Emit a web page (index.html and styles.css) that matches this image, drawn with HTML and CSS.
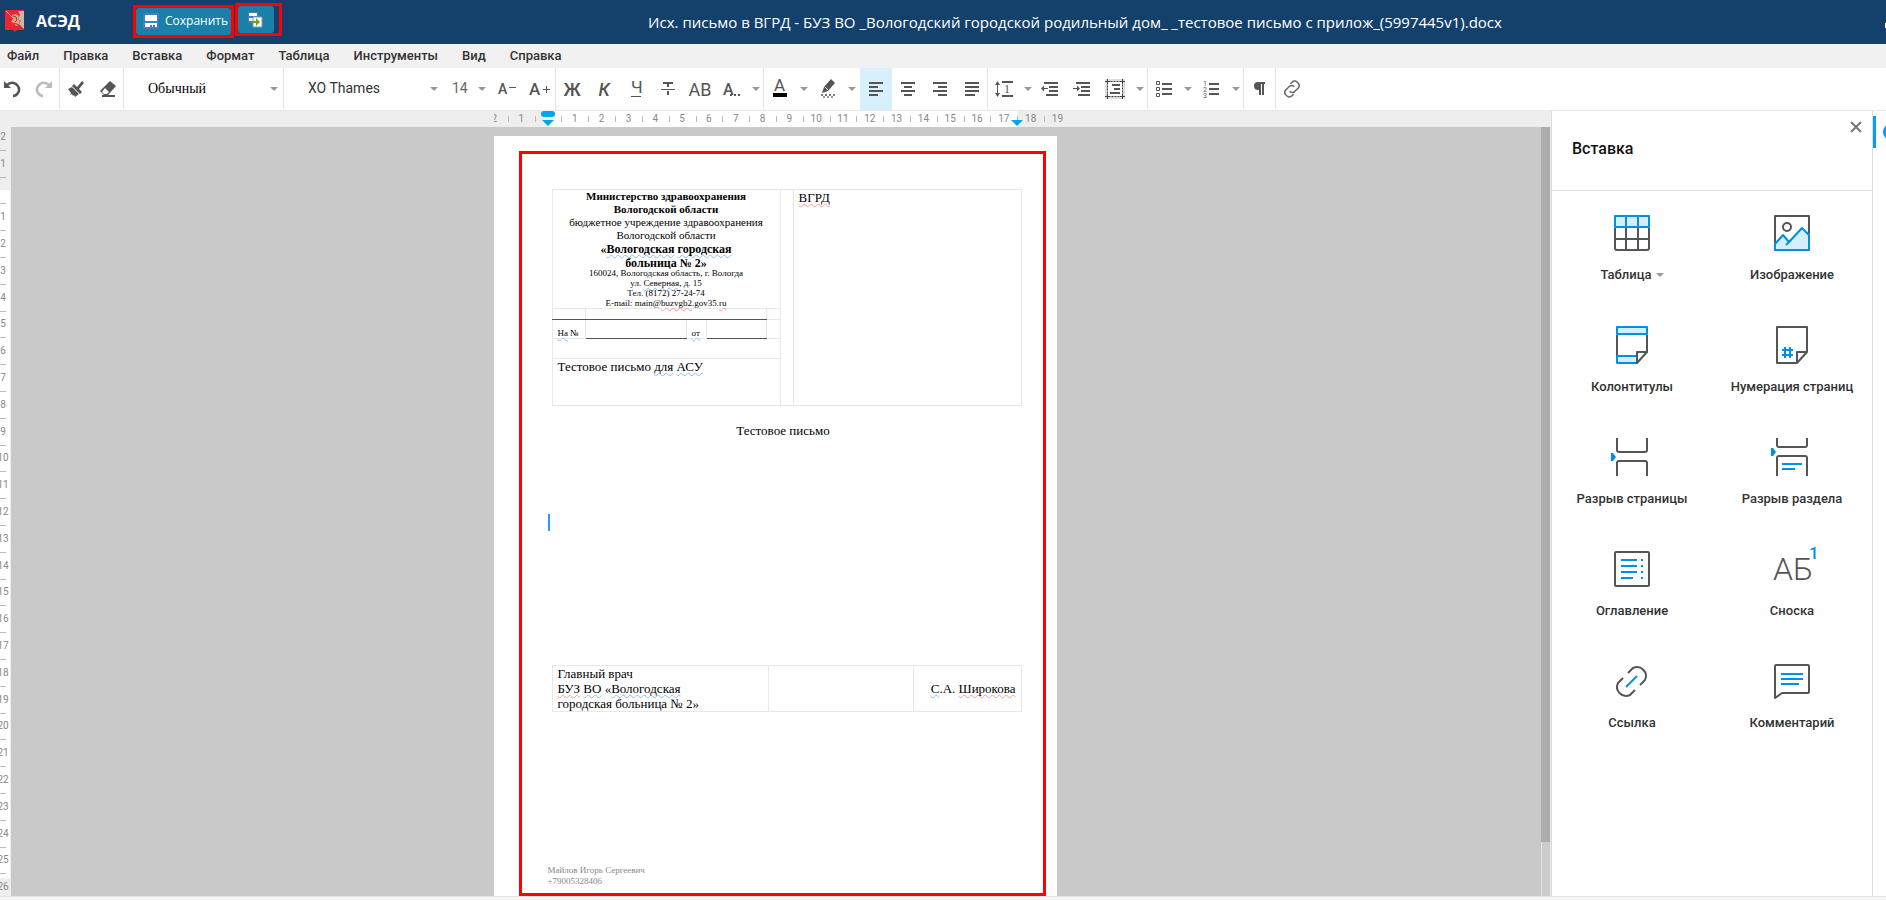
FILE: index.html
```html
<!DOCTYPE html>
<html lang="ru">
<head>
    <meta charset="UTF-8">
    <meta name="viewport" content="width=device-width, initial-scale=1.0">
    <title>АСЭД</title>
    <link rel="stylesheet" href="styles.css">
</head>
<body>
    <header class="topbar">
        <svg class="logo" width="20" height="24" viewBox="0 0 20 24">
            <path d="M0 1h19v19q0 1-1 1h-6l-2 2-2-2H1q-1 0-1-1z" fill="#ee2530"/>
            <path d="M13 2h6v18l-5-5 2-3-3-2 2-4z" fill="#c9b9a4"/>
            <path d="M1 2l8 8" stroke="#d9c8cf" stroke-width="1"/>
            <path d="M7 6l4-1 3 2-1 3 2 2-1 4-3 1-2-3-3-1 2-3z" fill="#e0a080"/>
            <path d="M8 7l3 1 1 3-2 2M9 14l5 2-2 3" stroke="#8c4a42" fill="none"/>
        </svg>
        <span class="brand">АСЭД</span>
        <div class="mark mark-save">
            <button class="top-button save-button">
                <svg width="16" height="16" viewBox="0 0 16 16">
                    <path d="M0 0h16v16H0z" fill="#3d7fc1"/>
                    <path d="M2 2h12v6H2zM2 10h12v4h-2v-2h-2v2H9v-2H7v2H2z" fill="#fff"/>
                </svg>
                Сохранить
            </button>
        </div>
        <div class="mark mark-export">
            <button class="top-button export-button" aria-label="Сохранить и закрыть">
                <svg width="16" height="16" viewBox="0 0 16 16">
                    <path d="M0 0h10v11H0z" fill="#3d7fc1"/>
                    <path d="M1 1h8v3H1zM1 6h5v3H1z" fill="#fff"/>
                    <path d="M5 5h9v10H5z" fill="#fff" stroke="#8b98a5"/>
                    <path d="M4 9h4V6l4 4-4 4v-3H4z" fill="#6aa51d"/>
                </svg>
            </button>
        </div>
        <h1 class="doc-title">Исх. письмо в ВГРД - БУЗ ВО _Вологодский городской родильный дом_ _тестовое письмо с прилож_(5997445v1).docx</h1>
        <button class="minimize" aria-label="Свернуть"></button>
    </header>

    <nav class="menu">
        <a href="#">Файл</a>
        <a href="#">Правка</a>
        <a href="#">Вставка</a>
        <a href="#">Формат</a>
        <a href="#">Таблица</a>
        <a href="#">Инструменты</a>
        <a href="#">Вид</a>
        <a href="#">Справка</a>
    </nav>

    <!-- Панель инструментов -->
    <div class="toolbar">
        <div class="group">
            <button class="tool" aria-label="Отменить">
                <svg width="18" height="18" viewBox="0 0 18 18"><path d="M1 1v7h7z" fill="#555"/><path d="M4 5q4-4 9-1 5 4 2 9-2 3-5 3" fill="none" stroke="#555" stroke-width="2.500"/></svg>
            </button>
            <button class="tool" aria-label="Повторить">
                <svg width="18" height="18" viewBox="0 0 18 18"><path d="M17 1v7h-7z" fill="#bbb"/><path d="M14 5q-4-4-9-1-5 4-2 9 2 3 5 3" fill="none" stroke="#bbb" stroke-width="2.500"/></svg>
            </button>
        </div>
        <div class="group">
            <button class="tool" aria-label="Копировать формат">
                <svg width="18" height="18" viewBox="0 0 18 18" fill="#555"><path d="M15 1l2 2-5 6-2-2zM7 4l8 8-2 2-8-8zM1 9l4-2 7 7-4 3-1-2-1 1-1-2-2 1 1-2z"/></svg>
            </button>
            <button class="tool" aria-label="Очистить формат">
                <svg width="18" height="18" viewBox="0 0 18 18"><path d="M11 1l6 5-8 9H5l-4-4z" fill="#555"/><path d="M6 8l4 4-2 2H5l-2-2z" fill="#fff"/><path d="M3 16h13" stroke="#555" stroke-width="2"/></svg>
            </button>
        </div>
        <div class="group">
            <label class="drop drop-style"><select aria-label="Стиль"><option>Обычный</option></select></label>
        </div>
        <div class="group">
            <label class="drop drop-font"><select aria-label="Шрифт"><option>XO Thames</option></select></label>
            <label class="drop drop-size"><select aria-label="Размер"><option>14</option></select></label>
            <button class="tool" aria-label="Уменьшить шрифт">
                <svg width="22" height="20" viewBox="0 0 22 20"><text x="1" y="15" font-size="14" font-weight="500">A</text><path d="M12 8.500h7" stroke="#555"/></svg>
            </button>
            <button class="tool" aria-label="Увеличить шрифт">
                <svg width="22" height="20" viewBox="0 0 22 20"><text x="0" y="16" font-size="17" font-weight="500">A</text><path d="M14 10.500h7M17.500 7v7" stroke="#555"/></svg>
            </button>
        </div>
        <div class="group">
            <button class="tool letter medium" aria-label="Жирный">Ж</button>
            <button class="tool letter medium italic" aria-label="Курсив">К</button>
            <button class="tool letter" aria-label="Подчёркнутый">
                <svg width="18" height="20" viewBox="0 0 18 20"><text x="4" y="14" font-size="17">Ч</text><path d="M4 17.500h10" stroke="#555"/></svg>
            </button>
            <button class="tool" aria-label="Зачёркнутый">
                <svg width="18" height="18" viewBox="0 0 18 18"><path d="M4 3h10M9 3v4M9 11v4" stroke="#555" stroke-width="2"/><path d="M2 9.500h14" stroke="#555"/></svg>
            </button>
            <button class="tool letter" aria-label="Прописные">АВ</button>
            <button class="tool" aria-label="Другие">
                <svg width="20" height="20" viewBox="0 0 20 20"><text x="1" y="16" font-size="16" font-weight="500">A</text><path d="M8 16h2M12 16h2M16 16h2" stroke="#555" stroke-width="2"/></svg>
            </button>
            <button class="arrow" aria-label="Ещё"></button>
        </div>
        <div class="group">
            <button class="tool" aria-label="Цвет текста">
                <svg width="18" height="20" viewBox="0 0 18 20"><text x="3" y="12" font-size="17">A</text><path d="M2 14h14v4H2z" fill="#000"/></svg>
            </button>
            <button class="arrow" aria-label="Выбрать цвет"></button>
            <button class="tool" aria-label="Выделение цветом">
                <svg width="16" height="20" viewBox="0 0 16 20"><path d="M11 0l4 4-7 8-6 2 2-6z" fill="#555"/><path d="M5 8l3 3" stroke="#fff"/><path d="M1 16h14" stroke="#777" stroke-width="2" stroke-dasharray="2 2"/><path d="M3 18h12" stroke="#999" stroke-width="2" stroke-dasharray="2 2"/></svg>
            </button>
            <button class="arrow" aria-label="Выбрать выделение"></button>
            <button class="tool active" aria-label="По левому краю">
                <svg width="14" height="14" viewBox="0 0 14 14"><path d="M0 1h14M0 5h9M0 9h14M0 13h9" stroke="#555" stroke-width="2"/></svg>
            </button>
            <button class="tool" aria-label="По центру">
                <svg width="14" height="14" viewBox="0 0 14 14"><path d="M0 1h14M3 5h8M0 9h14M3 13h8" stroke="#555" stroke-width="2"/></svg>
            </button>
            <button class="tool" aria-label="По правому краю">
                <svg width="14" height="14" viewBox="0 0 14 14"><path d="M0 1h14M5 5h9M0 9h14M5 13h9" stroke="#555" stroke-width="2"/></svg>
            </button>
            <button class="tool" aria-label="По ширине">
                <svg width="14" height="14" viewBox="0 0 14 14"><path d="M0 1h14M0 5h14M0 9h14M0 13h10" stroke="#555" stroke-width="2"/></svg>
            </button>
        </div>
        <div class="group">
            <button class="tool" aria-label="Интервал">
                <svg width="18" height="18" viewBox="0 0 18 18"><path d="M7 2h11M7 16h11" stroke="#555" stroke-width="2"/><path d="M2.500 3v12" stroke="#555"/><path d="M0 5l2.500-4L5 5zM0 13l2.500 4L5 13z" fill="#555"/><text x="9" y="13" font-size="12" class="serif">1</text></svg>
            </button>
            <button class="arrow" aria-label="Выбрать интервал"></button>
            <button class="tool" aria-label="Уменьшить отступ">
                <svg width="20" height="14" viewBox="0 0 20 14"><path d="M2 1h14M7 5h9M7 9h9M4 13h12" stroke="#555" stroke-width="2"/><path d="M1 6.500h5" stroke="#555"/><path d="M-1 6.500l3-3v6z" fill="#555"/></svg>
            </button>
            <button class="tool" aria-label="Увеличить отступ">
                <svg width="20" height="14" viewBox="0 0 20 14"><path d="M2 1h14M7 5h9M7 9h9M4 13h12" stroke="#555" stroke-width="2"/><path d="M-1 6.500h5" stroke="#555"/><path d="M6 6.500l-3-3v6z" fill="#555"/></svg>
            </button>
            <button class="tool" aria-label="Границы">
                <svg width="22" height="20" viewBox="0 0 22 20"><path d="M0 0h20v20H0z" fill="#ddd"/><path d="M3 3h14v14H3z" fill="#fff"/><path d="M2.500 2.500h15v15h-15z" fill="none" stroke="#444" stroke-dasharray="2 1"/><path d="M2.500 0v5M0 2.500h5M17.500 0v5M15 2.500h5M2.500 15v5M0 17.500h5M17.500 15v5M15 17.500h5" stroke="#444"/><path d="M7 6h8M9 10h6M5 14h10" stroke="#555" stroke-width="2"/></svg>
            </button>
            <button class="arrow" aria-label="Выбрать границы"></button>
        </div>
        <div class="group">
            <button class="tool" aria-label="Маркированный список">
                <svg width="16" height="16" viewBox="0 0 16 16"><path d="M.5.5h3v3h-3zM.5 6.500h3v3h-3zM.5 12.500h3v3h-3z" fill="none" stroke="#555"/><path d="M6 3h10M6 8h10M6 13h10" stroke="#555" stroke-width="2"/></svg>
            </button>
            <button class="arrow" aria-label="Выбрать маркер"></button>
            <button class="tool" aria-label="Нумерованный список">
                <svg width="18" height="20" viewBox="0 0 18 20"><text x="0" y="7" font-size="7">1</text><text x="0" y="13" font-size="7">2</text><text x="0" y="19" font-size="7">3</text><path d="M6 5h10M6 10h10M6 15h10" stroke="#555" stroke-width="2"/></svg>
            </button>
            <button class="arrow" aria-label="Выбрать нумерацию"></button>
        </div>
        <div class="group">
            <button class="tool" aria-label="Непечатаемые знаки">
                <svg width="12" height="14" viewBox="0 0 12 14"><path d="M4 1h7M6 1v12M9 1v12" stroke="#555" stroke-width="2"/><path d="M6 0H4a4 4 0 0 0 0 8h2z" fill="#555"/></svg>
            </button>
        </div>
        <div class="group">
            <button class="tool" aria-label="Ссылка">
                <svg width="18" height="18" viewBox="0 0 24 24" fill="none" stroke="#666" stroke-width="2"><path d="M10 5l2-2a5 5 0 0 1 8 1 5 5 0 0 1 1 6l-6 6a5 5 0 0 1-6-1"/><path d="M14 19l-2 2a5 5 0 0 1-8-1 5 5 0 0 1-1-6l6-6a5 5 0 0 1 6 1"/></svg>
            </button>
        </div>
    </div>

    <div class="workspace">
        <main class="editor">
            <!-- Горизонтальная линейка -->
            <div class="ruler-top">
                <div class="ruler-track">
                    <div class="ruler-cells">
                        <span>2</span><span>1</span><span></span><span>1</span><span>2</span><span>3</span><span>4</span><span>5</span><span>6</span><span>7</span><span>8</span><span>9</span><span>10</span><span>11</span><span>12</span><span>13</span><span>14</span><span>15</span><span>16</span><span>17</span><span>18</span><span>19</span>
                    </div>
                    <i class="indent-first"></i>
                    <i class="indent indent-left"></i>
                    <i class="indent indent-right"></i>
                </div>
            </div>
            <div class="editor-body">
                <!-- Вертикальная линейка -->
                <div class="ruler-side">
                    <div class="side-cells">
                        <span>2</span><span>1</span><span></span><span>1</span><span>2</span><span>3</span><span>4</span><span>5</span><span>6</span><span>7</span><span>8</span><span>9</span><span>10</span><span>11</span><span>12</span><span>13</span><span>14</span><span>15</span><span>16</span><span>17</span><span>18</span><span>19</span><span>20</span><span>21</span><span>22</span><span>23</span><span>24</span><span>25</span><span>26</span>
                    </div>
                </div>
                <div class="canvas">
                    <article class="sheet">
                        <div class="frame">
                            <table class="letterhead">
                                <colgroup><col class="c1"><col class="c2"><col class="c3"><col class="c4"><col class="c5"><col class="c6"><col></colgroup>
                                <tr class="row-org">
                                    <td colspan="5" class="org">
                                        <p class="org-main"><b>Министерство здравоохранения</b><br><b>Вологодской области</b><br>бюджетное учреждение здравоохранения<br>Вологодской области</p>
                                        <p class="org-name">«<u class="gr">Вологодская</u> <u class="gr">городская</u><br>больница № 2»</p>
                                        <p class="org-address">160024, Вологодская область, г. Вологда<br>ул. <u class="gr">Северная</u>, д. 15<br>Тел. (8172) 27-24-74<br>E-mail: main@<u class="sp">buzvgb2</u>.gov35.<u class="sp">ru</u></p>
                                    </td>
                                    <td rowspan="5"></td>
                                    <td rowspan="5" class="addressee"><u class="sp">ВГРД</u></td>
                                </tr>
                                <tr class="row-number"><td class="line"></td><td class="line" colspan="3"></td><td></td></tr>
                                <tr class="row-reply"><td class="tiny"><u class="gr">На</u> №</td><td class="line"></td><td class="tiny"><u class="gr">от</u></td><td class="line"></td><td></td></tr>
                                <tr class="row-gap"><td colspan="5"></td></tr>
                                <tr class="row-subject"><td colspan="5">Тестовое письмо <u class="gr">для</u> <u class="gr">АСУ</u></td></tr>
                            </table>
                            <p class="heading">Тестовое письмо</p>
                            <div class="typing"><i class="caret"></i></div>
                            <table class="signature">
                                <colgroup><col class="s1"><col class="s2"><col></colgroup>
                                <tr>
                                    <td>Главный врач<br><u class="sp">БУЗ</u> <u class="gr">ВО</u> «<u class="gr">Вологодская</u><br>городская больница № 2»</td>
                                    <td></td>
                                    <td class="signer"><u class="gr">С</u>.А. <u class="sp">Широкова</u></td>
                                </tr>
                            </table>
                            <p class="author">Майлов Игорь Сергеевич<br>+79005328406</p>
                        </div>
                    </article>
                </div>
                <div class="scrollbar"><div class="thumb"></div></div>
            </div>
        </main>

        <!-- Боковая панель вставки -->
        <aside class="panel">
            <div class="panel-head">
                <h2>Вставка</h2>
                <button class="close" aria-label="Закрыть"><svg width="12" height="12" viewBox="0 0 12 12"><path d="M1 1l10 10M11 1L1 11" stroke="#777" stroke-width="2"/></svg></button>
            </div>
            <div class="cards">
                <button class="card">
                    <svg viewBox="0 0 40 40"><path d="M3 15v20q0 2 2 2h30q2 0 2-2V15M3 26h34M14 15v22M26 15v22"/><path class="blue fill" d="M3 3h34v11H3z"/><path class="blue" d="M14 3v11M26 3v11"/></svg>
                    <span>Таблица <i class="caret-down"></i></span>
                </button>
                <button class="card">
                    <svg viewBox="0 0 40 40"><path d="M3 30V3h34v18"/><circle cx="15" cy="14" r="4"/><path class="blue fill" d="M3 31l8-9 6 7 13-14 7 7v15H3z"/><path class="blue" d="M14 32l4-4"/></svg>
                    <span>Изображение</span>
                </button>
                <button class="card">
                    <svg viewBox="0 0 40 40"><path d="M5 10v22M35 10v18"/><path class="blue fill" d="M5 2h30v7H5zM25 31H5v7h20z"/><path class="paper" d="M25 38V27h10z"/></svg>
                    <span>Колонтитулы</span>
                </button>
                <button class="card">
                    <svg viewBox="0 0 40 40"><path d="M25 38H5V2h30v25L25 38V27h10"/><path class="blue" d="M13 22v11M18 22v11M10 25h11M10 30h11"/></svg>
                    <span>Нумерация страниц</span>
                </button>
                <button class="card">
                    <svg viewBox="0 0 40 40"><path d="M5 1v12q0 2 2 2h26q2 0 2-2V1M5 39V26q0-2 2-2h26q2 0 2 2v13"/><path d="M-1 16h2l3 4-3 4h-2z" class="solid"/></svg>
                    <span>Разрыв страницы</span>
                </button>
                <button class="card">
                    <svg viewBox="0 0 40 40"><path d="M5 1v7q0 2 2 2h26q2 0 2-2V1M5 39V21q0-2 2-2h26q2 0 2 2v18"/><path class="blue" d="M10 27h20M10 32h13"/><path d="M-1 11h2l3 4-3 4h-2z" class="solid"/></svg>
                    <span>Разрыв раздела</span>
                </button>
                <button class="card">
                    <svg viewBox="0 0 40 40"><rect x="3" y="3" width="34" height="34" rx="1"/><path class="blue" d="M9 11h16M9 17h16M9 23h16M9 29h12"/><path class="blue" d="M29 11h2M29 17h2M29 23h2M29 29h2"/></svg>
                    <span>Оглавление</span>
                </button>
                <button class="card">
                    <svg viewBox="0 0 40 40"><text x="1" y="31" font-size="32" font-weight="300">АБ</text><text x="37" y="10" font-size="17" class="note">1</text></svg>
                    <span>Сноска</span>
                </button>
                <button class="card">
                    <svg viewBox="0 0 40 40"><path d="M16 12l5-5a9 9 0 0 1 12 12l-5 5M11 17l-5 5a9 9 0 0 0 12 12l5-5"/><path class="blue" d="M14 26l11-11"/></svg>
                    <span>Ссылка</span>
                </button>
                <button class="card">
                    <svg viewBox="0 0 40 40"><path d="M3 37V5q0-1 1-1h32q1 0 1 1v26q0 1-1 1H10z"/><path class="blue" d="M9 13h22M9 18h22M9 23h18"/></svg>
                    <span>Комментарий</span>
                </button>
            </div>
        </aside>
        <div class="rail"><button class="rail-button" aria-label="Вставка"></button></div>
    </div>
    <footer class="status"></footer>
</body>
</html>
```
FILE: styles.css
```css
* {
    box-sizing: border-box;
}
body {
    margin: 0;
    height: 100vh;
    display: flex;
    flex-direction: column;
    overflow: hidden;
    font-family: Roboto, sans-serif;
    font-size: 13px;
    color: #333;
    background: #fff;
}
button {
    border: none;
    background: none;
    padding: 0;
    font: inherit;
    color: inherit;
    cursor: pointer;
}
p, h1, h2 {
    margin: 0;
}

/* Шапка */
.topbar {
    display: flex;
    align-items: flex-start;
    height: 44px;
    flex: none;
    background: #14406c;
    color: #fff;
    font-family: "Open Sans", sans-serif;
}
.logo {
    margin: 9px 11px 0 5px;
}
.brand {
    width: 97px;
    line-height: 42px;
    font-size: 16px;
    font-weight: 700;
}
.mark {
    display: flex;
    border: 3px solid #f00;
}
.mark-save {
    width: 101px;
    height: 33px;
    margin-top: 5px;
}
.mark-export {
    width: 47px;
    height: 33px;
    margin: 3px 0 0 1px;
}
.top-button {
    display: flex;
    align-items: center;
    background: #1a7fa9;
    color: #fff;
    border-radius: 3px;
}
.save-button {
    flex: 1;
    gap: 6px;
    padding: 0 0 2px 7px;
    font-size: 12px;
}
.export-button {
    width: 36px;
    justify-content: center;
}
.doc-title {
    flex: 1;
    text-align: center;
    line-height: 44px;
    font-size: 15px;
    font-weight: 400;
    white-space: nowrap;
}
.minimize {
    width: 1px;
    height: 5px;
    margin: 23px 0 0 17px;
    background: #fff;
}

/* Меню */
.menu {
    display: flex;
    gap: 24px;
    flex: none;
    height: 24px;
    padding-left: 7px;
    background: #f1f1f1;
}
.menu a {
    color: #333;
    text-decoration: none;
    font-weight: 500;
    line-height: 23px;
}

/* Панель инструментов */
.toolbar {
    display: flex;
    flex: none;
    height: 43px;
    margin-left: -4px;
    border-bottom: 1px solid #e8e8e8;
}
.group {
    display: flex;
}
.group + .group {
    margin-left: -1px;
    border-left: 1px solid #e4e4e4;
}
.tool {
    display: flex;
    align-items: center;
    justify-content: center;
    width: 32px;
    color: #555;
}
.tool svg {
    overflow: visible;
}
.tool text {
    fill: #555;
}
.tool .serif {
    font-family: "Liberation Serif", serif;
}
.tool.active {
    background: #d8effd;
}
.letter {
    font-size: 18px;
}
.medium {
    font-weight: 500;
}
.italic {
    font-style: italic;
}
.arrow {
    width: 16px;
    display: flex;
    align-items: center;
    justify-content: center;
}
.arrow::after, .drop::after, .caret-down {
    content: "";
    border: 4px solid transparent;
    border-top-color: #999;
    border-bottom: none;
}
.drop {
    position: relative;
    display: flex;
    width: 160px;
}
.drop::after {
    position: absolute;
    right: 6px;
    top: 19px;
    pointer-events: none;
}
.drop select {
    appearance: none;
    width: 100%;
    border: none;
    background: none;
    padding: 0 0 2px 24px;
    font: 14px Roboto, sans-serif;
    color: #333;
}
.drop-style select {
    font: 14px "Liberation Serif", serif;
    color: #000;
}
.drop-size {
    width: 48px;
}
.drop-size select {
    padding-left: 8px;
    color: #666;
}

.workspace {
    display: flex;
    flex: 1;
    min-height: 0;
}
.editor {
    display: flex;
    flex-direction: column;
    flex: 1;
    min-width: 0;
}

/* Линейки */
.ruler-top {
    display: flex;
    justify-content: center;
    flex: none;
    height: 16px;
    background: #eee;
}
.ruler-track {
    position: relative;
    width: 577px;
    margin-left: 14px;
    overflow: hidden;
}
.ruler-cells {
    display: flex;
    width: 590px;
    height: 16px;
    margin-left: -13px;
    background: linear-gradient(to right, #eee 67px, #fff 67px, #fff 536px, #eee 536px);
}
.ruler-cells span {
    flex: 1;
    text-align: center;
    font-size: 10px;
    line-height: 16px;
    color: #888;
    background: linear-gradient(#bbb, #bbb) left 5px / 1px 6px no-repeat;
}
.indent-first {
    position: absolute;
    left: 47px;
    top: 0;
    width: 14px;
    height: 6px;
    border-radius: 3px;
    background: #00a4ef;
}
.indent {
    position: absolute;
    top: 9px;
    border: 6px solid transparent;
    border-top-color: #00a4ef;
    border-bottom: none;
}
.indent-left {
    left: 48px;
}
.indent-right {
    left: 517px;
}
.editor-body {
    display: flex;
    flex: 1;
    min-height: 0;
}
.ruler-side {
    width: 11px;
    padding-top: 9px;
    background: #eee;
    overflow: hidden;
}
.side-cells {
    display: flex;
    flex-direction: column;
    width: 10px;
    height: 777px;
    margin-top: -13px;
    background: linear-gradient(#eee 67px, #fff 67px, #fff 755px, #eee 755px);
}
.side-cells span {
    display: flex;
    align-items: center;
    justify-content: center;
    flex: 1;
    width: 6px;
    font-size: 10px;
    color: #888;
    background: linear-gradient(#bbb, #bbb) left top / 6px 1px no-repeat;
}

/* Документ */
.canvas {
    display: flex;
    justify-content: center;
    flex: 1;
    min-width: 0;
    padding: 9px 2px 0 0;
    background: #c9c9c9;
}
.sheet {
    display: flex;
    width: 563px;
    padding: 15px 11px 0 25px;
    background: #fff;
}
.frame {
    flex: 1;
    min-width: 0;
    padding: 35px 24px 0 26px;
    border: 3px solid #f00;
    font-family: "Liberation Serif", serif;
    font-size: 13px;
    line-height: 15px;
    color: #000;
}
.frame table {
    width: 470px;
    margin-left: 4px;
    border-collapse: collapse;
    table-layout: fixed;
}
.frame td {
    padding: 0 5px;
    border: 1px solid #e8e8e8;
    vertical-align: top;
}
.frame u {
    text-decoration: underline wavy 1px;
    text-decoration-skip-ink: none;
}
.frame .sp {
    text-decoration-color: #f99;
}
.frame .gr {
    text-decoration-color: #8bc0f5;
}
.c1 {
    width: 33px;
}
.c2 {
    width: 101px;
}
.c3 {
    width: 20px;
}
.c4 {
    width: 60px;
}
.c5 {
    width: 14px;
}
.c6 {
    width: 13px;
}
.frame .org {
    height: 119px;
    text-align: center;
}
.org-main {
    font-size: 11px;
    line-height: 13px;
}
.org-name {
    font-size: 12px;
    line-height: 14px;
    font-weight: 700;
}
.org-address {
    margin-top: -2px;
    font-size: 9px;
    line-height: 10px;
}
.frame .line {
    border-bottom: 1px solid #555;
}
.row-number {
    height: 11px;
}
.row-reply {
    height: 19px;
}
.frame .tiny {
    vertical-align: bottom;
    padding-right: 0;
    font-size: 9px;
    line-height: 10px;
    white-space: nowrap;
}
.row-gap {
    height: 20px;
}
.row-subject {
    height: 47px;
}
.heading {
    margin-top: 17px;
    text-align: center;
}
.typing {
    height: 227px;
    padding-top: 76px;
}
.caret {
    display: block;
    width: 2px;
    height: 17px;
    background: #2b9af3;
}
.s1 {
    width: 216px;
}
.s2 {
    width: 145px;
}
.frame .signer {
    text-align: right;
    vertical-align: middle;
}
.author {
    margin-top: 153px;
    font-size: 9px;
    line-height: 11px;
    color: #888;
}
.scrollbar {
    width: 10px;
    border: solid #e4e4e4;
    border-width: 0 1px;
    background: #ccc;
}
.thumb {
    height: 93%;
    margin-left: -1px;
    background: #adadad;
}

/* Панель вставки */
.panel {
    flex: none;
    width: 322px;
    border: solid #ddd;
    border-width: 0 1px;
    background: #fff;
}
.panel-head {
    display: flex;
    justify-content: space-between;
    align-items: flex-start;
    height: 80px;
    padding: 10px 10px 0 20px;
    border-bottom: 1px solid #e0e0e0;
}
.panel-head h2 {
    padding-top: 18px;
    font-size: 16px;
    line-height: 20px;
    font-weight: 500;
    color: #111;
}
.close {
    display: flex;
}
.cards {
    display: grid;
    grid-template-columns: 1fr 1fr;
}
.card {
    display: flex;
    flex-direction: column;
    align-items: center;
    gap: 14px;
    height: 112px;
    padding-top: 22px;
    font-weight: 500;
    line-height: 16px;
}
.card svg {
    width: 40px;
    height: 40px;
    overflow: visible;
    fill: none;
    stroke: #555;
    stroke-width: 2;
    stroke-linejoin: round;
}
.card span {
    display: flex;
    align-items: center;
    gap: 4px;
}
.card .blue {
    stroke: #0090e3;
}
.card .fill {
    fill: #d5eefc;
}
.card .paper {
    fill: #fff;
}
.card .solid {
    fill: #0090e3;
    stroke: none;
}
.card text {
    fill: #555;
    stroke: none;
}
.card .note {
    fill: #0090e3;
}
.rail {
    flex: none;
    width: 13px;
    padding-top: 5px;
    overflow: hidden;
}
.rail-button {
    display: block;
    width: 48px;
    height: 32px;
    padding-left: 7px;
    border-left: 3px solid #00a0f5;
}
.rail-button::before {
    content: "";
    display: block;
    width: 18px;
    height: 18px;
    border-radius: 50%;
    background: #00a0f5;
}
.status {
    flex: none;
    height: 4px;
    border-top: 1px solid #e2e2e2;
    background: #f3f3f3;
}
```
